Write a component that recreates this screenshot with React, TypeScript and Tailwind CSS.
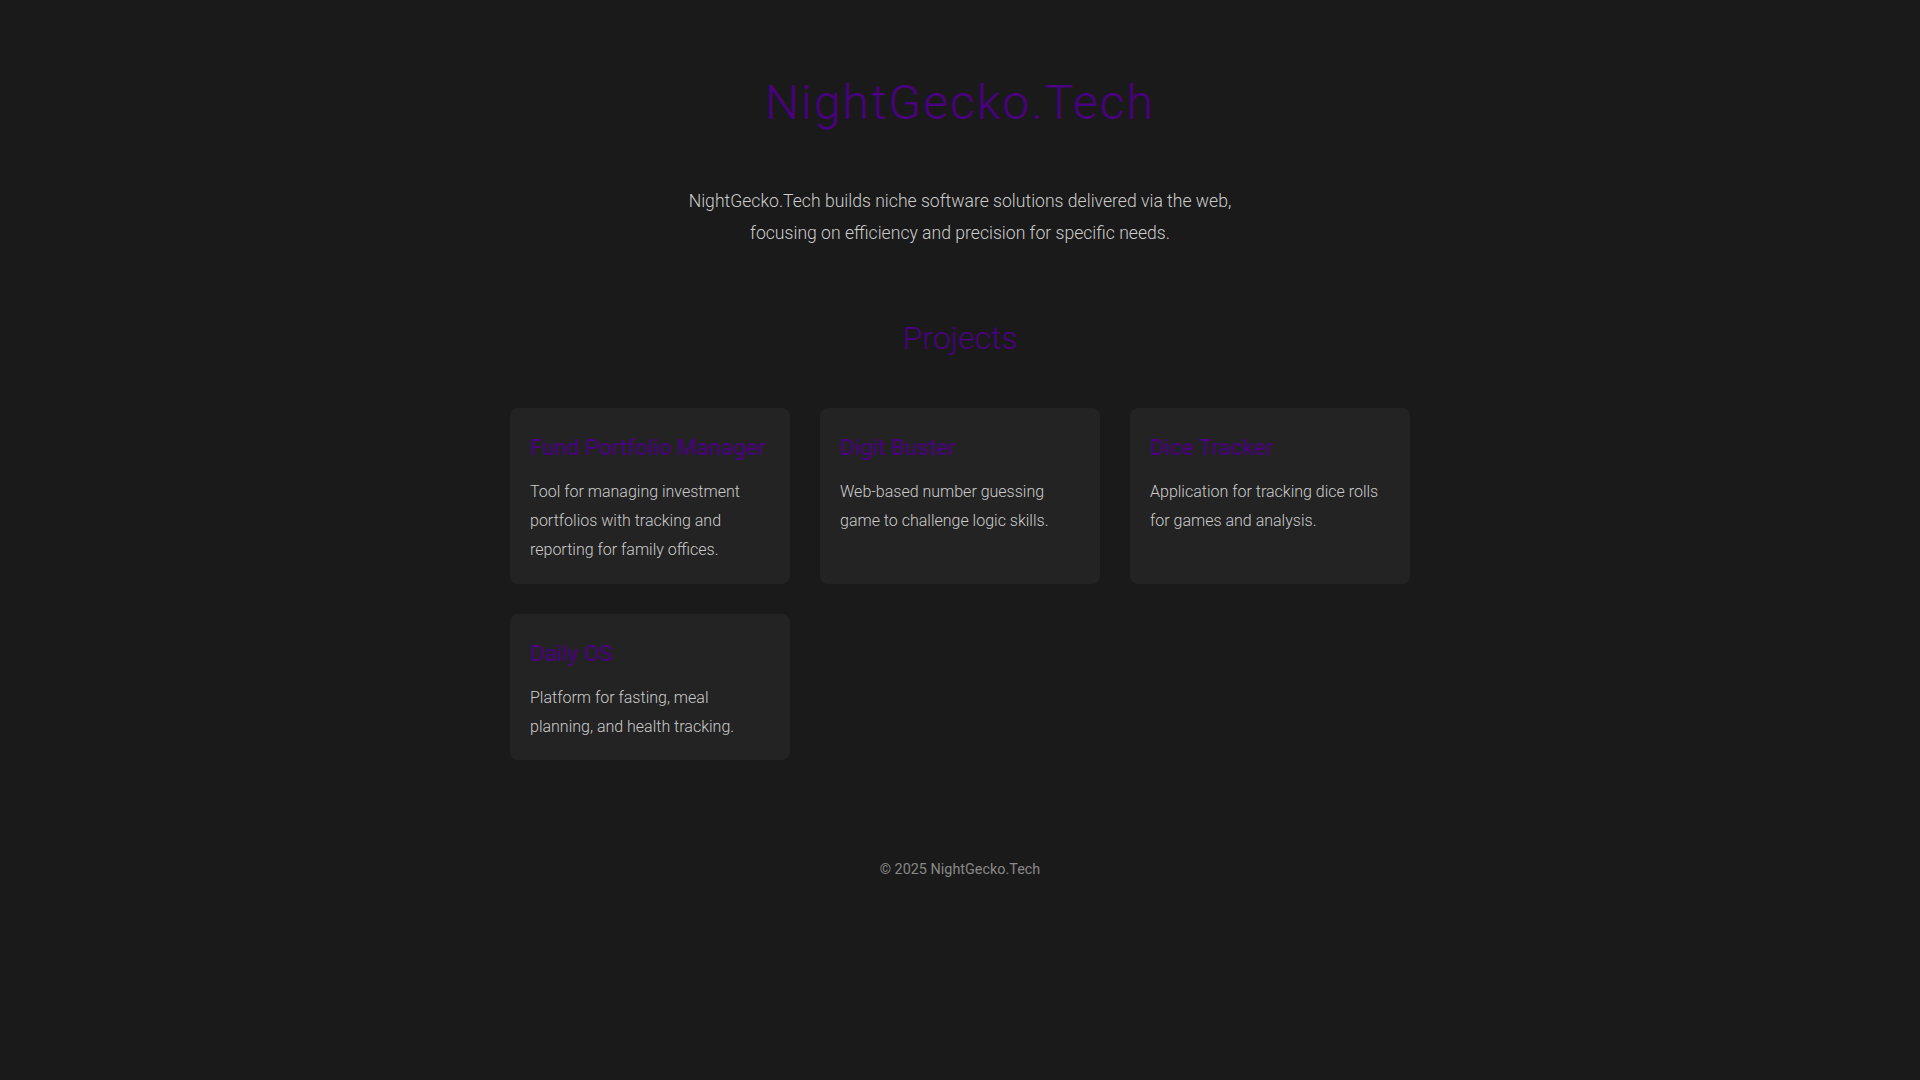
import React from "react";

interface Project {
	title: string;
	description: string;
}

const projects: Project[] = [
	{
		title: "Fund Portfolio Manager",
		description: "Tool for managing investment portfolios with tracking and reporting for family offices.",
	},
	{
		title: "Digit Buster",
		description: "Web-based number guessing game to challenge logic skills.",
	},
	{
		title: "Dice Tracker",
		description: "Application for tracking dice rolls for games and analysis.",
	},
	{
		title: "Daily OS",
		description: "Platform for fasting, meal planning, and health tracking.",
	},
];

const ProjectCard: React.FC<{ project: Project }> = ({ project }) => (
	<div className="rounded-lg bg-[#232323] px-5 pt-[26px] pb-[19px]">
		<h3 className="text-[22.4px] leading-[1.17] font-normal text-[#4b0082] mb-[18px]">{project.title}</h3>
		<p className="text-base leading-[1.8] font-light text-[#cccccc]">{project.description}</p>
	</div>
);

const App: React.FC = () => {
	return (
		<div
			className="min-h-screen bg-[#1a1a1a] text-[#cccccc]"
			style={{ fontFamily: "Roboto, 'Noto Sans', sans-serif" }}
		>
			<div className="max-w-[900px] mx-auto pt-[75px] pb-20">
				<header className="text-center">
					<h1 className="text-5xl leading-[1.17] font-light tracking-[2px] text-[#4b0082]">NightGecko.Tech</h1>
					<p className="mt-[55px] max-w-[600px] mx-auto text-[17.6px] leading-[1.8] font-light text-[#cccccc]">
						NightGecko.Tech builds niche software solutions delivered via the web, focusing on efficiency and
						precision for specific needs.
					</p>
				</header>

				<section className="mt-[71px]">
					<h2 className="text-center text-[32px] leading-[1.17] font-light text-[#4b0082]">Projects</h2>
					<div className="grid grid-cols-3 gap-[30px] mt-[50px]">
						{projects.map((p) => (
							<ProjectCard key={p.title} project={p} />
						))}
					</div>
				</section>

				<footer className="mt-[102px] text-center text-[14.4px] leading-[1.17] text-[#888888]">
					© 2025 NightGecko.Tech
				</footer>
			</div>
		</div>
	);
};

export default App;
